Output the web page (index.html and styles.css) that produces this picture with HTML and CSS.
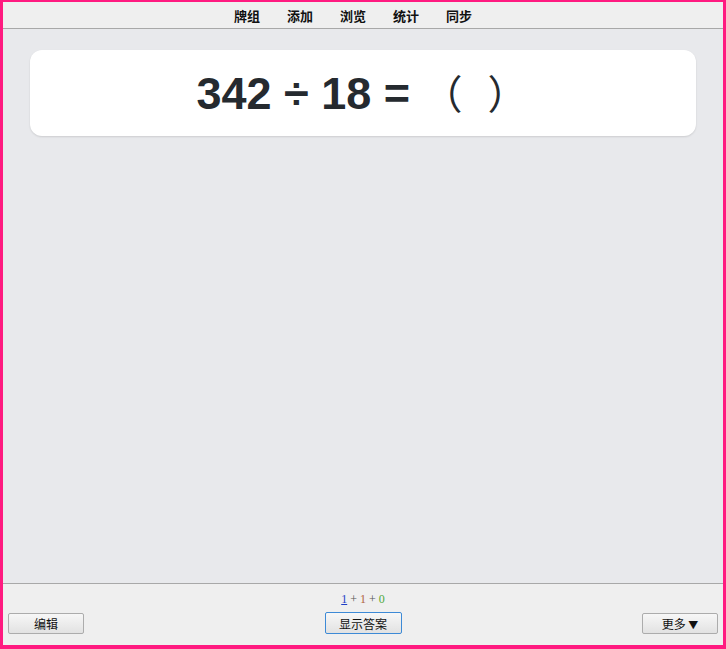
FILE: index.html
```html
<!DOCTYPE html>
<html lang="zh-CN">
<head>
    <meta charset="UTF-8">
    <title>复习</title>
    <link rel="stylesheet" href="styles.css">
</head>
<body>
    <div class="frame">
        <div class="toolbar">
            <a class="tab">牌组</a>
            <a class="tab">添加</a>
            <a class="tab">浏览</a>
            <a class="tab">统计</a>
            <a class="tab">同步</a>
        </div>

        <div class="main">
            <div class="card">
                <span class="question">342 ÷ 18 = <span class="paren">（ ）</span></span>
            </div>
        </div>

        <div class="bottom">
            <div class="counts">
                <span class="new">1</span> + <span class="learn">1</span> + <span class="review">0</span>
            </div>
            <div class="buttons">
                <button class="btn">编辑</button>
                <button class="btn btn-answer">显示答案</button>
                <button class="btn">更多 <span class="arrow">▼</span></button>
            </div>
        </div>
    </div>
</body>
</html>
```

FILE: styles.css
```css
html, body {
    margin: 0;
    height: 100%;
}
body {
    font-family: "Liberation Sans", "Noto Sans CJK SC", sans-serif;
    background-color: #ff1a80;
}
.frame {
    box-sizing: border-box;
    height: 100vh;
    border: 3px solid #ff1a80;
    border-top-width: 2px;
    border-bottom-width: 4px;
    display: flex;
    flex-direction: column;
    background-color: #e8e9ec;
}

/* barra superior */
.toolbar {
    height: 26px;
    background-color: #efefef;
    border-bottom: 1px solid #a8a8a8;
    display: flex;
    justify-content: center;
    align-items: center;
    gap: 27px;
    padding-right: 20px;
}
.tab {
    font-family: "Noto Sans CJK SC", sans-serif;
    font-size: 13px;
    font-weight: bold;
    color: #111;
}

/* area da carta */
.main {
    flex: 1;
    padding: 21px 27px 0;
}
.card {
    background-color: #fff;
    border-radius: 12px;
    height: 86px;
    box-shadow: 0 1px 2px rgba(0, 0, 0, 0.12);
    display: flex;
    justify-content: center;
    align-items: center;
}
.question {
    font-size: 45px;
    font-weight: bold;
    color: #252a2f;
    margin-right: 2px;
    margin-top: -2px;
}
.paren {
    font-family: "Noto Sans CJK SC", sans-serif;
    font-weight: normal;
    font-size: 40px;
    word-spacing: 16px;
    color: #252a2f;
}

/* barra inferior */
.bottom {
    height: 62px;
    background-color: #efefef;
    border-top: 1px solid #a8a8a8;
    box-sizing: border-box;
    padding: 7px 5px 0;
}
.counts {
    text-align: center;
    font-family: "Liberation Serif", "Noto Sans CJK SC", serif;
    font-size: 12px;
    color: #555;
    height: 16px;
    padding-top: 1px;
}
.new {
    color: #1f3fc7;
    text-decoration: underline;
}
.learn {
    color: #b0623e;
}
.review {
    color: #4ea93c;
}
.buttons {
    display: flex;
    justify-content: space-between;
    align-items: center;
    margin-top: 4px;
}
.btn {
    width: 76px;
    height: 21px;
    padding: 0;
    font-family: "Noto Sans CJK SC", sans-serif;
    font-size: 12px;
    color: #111;
    border: 1px solid #acacac;
    border-radius: 2px;
    background: linear-gradient(#f7f7f7, #e2e2e2);
}
.btn-answer {
    width: 77px;
    height: 22px;
    border-color: #3d8ad6;
}
.arrow {
    font-size: 10px;
}
```
